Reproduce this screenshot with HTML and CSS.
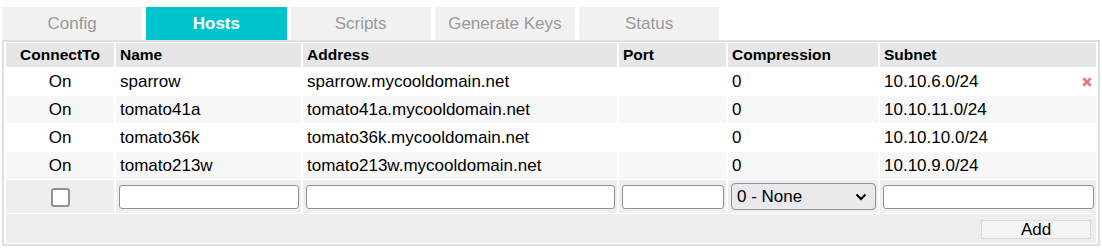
FILE: index.html
```html
<!DOCTYPE html>
<html>
<head>
<meta charset="utf-8">
<link rel="stylesheet" href="styles.css">
</head>
<body>
<div class="page">
  <div class="tabs">
    <div class="tab">Config</div>
    <div class="tab active">Hosts</div>
    <div class="tab">Scripts</div>
    <div class="tab">Generate Keys</div>
    <div class="tab">Status</div>
  </div>
  <table class="grid">
    <colgroup>
      <col class="c-connect">
      <col class="c-name">
      <col class="c-address">
      <col class="c-port">
      <col class="c-comp">
      <col class="c-subnet">
    </colgroup>
    <thead>
      <tr>
        <th class="center">ConnectTo</th>
        <th>Name</th>
        <th>Address</th>
        <th>Port</th>
        <th>Compression</th>
        <th>Subnet</th>
      </tr>
    </thead>
    <tbody>
      <tr class="row">
        <td class="center">On</td>
        <td>sparrow</td>
        <td>sparrow.mycooldomain.net</td>
        <td></td>
        <td>0</td>
        <td><span class="del"><svg width="10" height="10" viewBox="0 0 10 10"><path d="M1.3 1.3 L8.7 8.7 M8.7 1.3 L1.3 8.7" stroke="#e57a7a" stroke-width="2.7" stroke-linecap="butt"/></svg></span>10.10.6.0/24</td>
      </tr>
      <tr class="row alt">
        <td class="center">On</td>
        <td>tomato41a</td>
        <td>tomato41a.mycooldomain.net</td>
        <td></td>
        <td>0</td>
        <td>10.10.11.0/24</td>
      </tr>
      <tr class="row">
        <td class="center">On</td>
        <td>tomato36k</td>
        <td>tomato36k.mycooldomain.net</td>
        <td></td>
        <td>0</td>
        <td>10.10.10.0/24</td>
      </tr>
      <tr class="row alt">
        <td class="center">On</td>
        <td>tomato213w</td>
        <td>tomato213w.mycooldomain.net</td>
        <td></td>
        <td>0</td>
        <td>10.10.9.0/24</td>
      </tr>
      <tr class="edit">
        <td class="center"><input type="checkbox" class="chk"></td>
        <td><input type="text" class="txt"></td>
        <td><input type="text" class="txt"></td>
        <td><input type="text" class="txt"></td>
        <td>
          <div class="selwrap">
            <select class="sel"><option>0 - None</option></select>
            <svg class="chev" width="12" height="8" viewBox="0 0 12 8"><path d="M1.5 1.5 L6 6 L10.5 1.5" fill="none" stroke="#000" stroke-width="2"/></svg>
          </div>
        </td>
        <td><input type="text" class="txt"></td>
      </tr>
      <tr class="foot">
        <td colspan="6"><button class="add">Add</button></td>
      </tr>
    </tbody>
  </table>
</div>
</body>
</html>
```

FILE: styles.css
```css
body {
  margin: 0;
  background: #fff;
  color: #000;
  font-family: "Liberation Sans", Arial, sans-serif;
}

.page {
  padding: 7px 2px 0 2px;
}

.tabs {
  display: flex;
  gap: 4px;
}

.tab {
  width: 140.25px;
  height: 33px;
  display: flex;
  align-items: center;
  justify-content: center;
  background: #f1f1f1;
  color: #9a9a9a;
  font-size: 17px;
}

.tab.active {
  background: #00c4cc;
  color: #fff;
  font-weight: bold;
}

.grid {
  width: 1098px;
  table-layout: fixed;
  border: 2px solid #dfdfdf;
  border-spacing: 2px 1px;
  font-size: 17px;
}

.c-connect { width: 108px; }
.c-name { width: 185px; }
.c-address { width: 314px; }
.c-port { width: 107px; }
.c-comp { width: 150px; }
.c-subnet { width: 216px; }

th {
  height: 24px;
  padding: 0 4px;
  background: #e6e6e6;
  text-align: left;
  font-size: 15.5px;
  font-weight: bold;
}

td {
  padding: 0 4px;
  white-space: nowrap;
}

.center {
  text-align: center;
}

.row td {
  height: 27px;
  background: #fff;
}

.row.alt td {
  background: #f7f7f7;
}

.del {
  float: right;
  margin-right: 0;
  display: flex;
  padding-top: 5px;
}

.edit td {
  height: 33px;
  padding: 0 2px 0 3px;
  background: #eeeeee;
}

.chk {
  appearance: none;
  box-sizing: border-box;
  width: 19px;
  height: 19px;
  margin: 0;
  border: 2px solid #8f8f9d;
  border-radius: 3px;
  background: #fff;
  vertical-align: middle;
}

.txt {
  box-sizing: border-box;
  width: 100%;
  height: 24px;
  margin: 0;
  border: 1px solid #8f8f9d;
  border-radius: 3px;
  background: #fff;
  font-size: 15px;
  font-family: "Liberation Sans", Arial, sans-serif;
  vertical-align: middle;
}

.selwrap {
  position: relative;
  display: flex;
}

.sel {
  appearance: none;
  box-sizing: border-box;
  width: 100%;
  height: 27px;
  margin: 0;
  padding: 0 0 0 5px;
  border: 1px solid #8f8f9d;
  border-radius: 4px;
  background: #e9e9ed;
  color: #000;
  font-size: 17px;
  font-family: "Liberation Sans", Arial, sans-serif;
}

.chev {
  position: absolute;
  right: 9px;
  top: 10px;
  pointer-events: none;
}

.foot td {
  height: 29px;
  padding: 0 5px 0 0;
  background: #eeeeee;
  text-align: right;
}

.add {
  width: 110px;
  height: 19px;
  padding: 0;
  margin: 0;
  border: 1px solid #dcdcdc;
  background: #f4f4f4;
  color: #000;
  font-size: 17px;
  line-height: 17px;
  font-family: "Liberation Sans", Arial, sans-serif;
  vertical-align: middle;
}
```
